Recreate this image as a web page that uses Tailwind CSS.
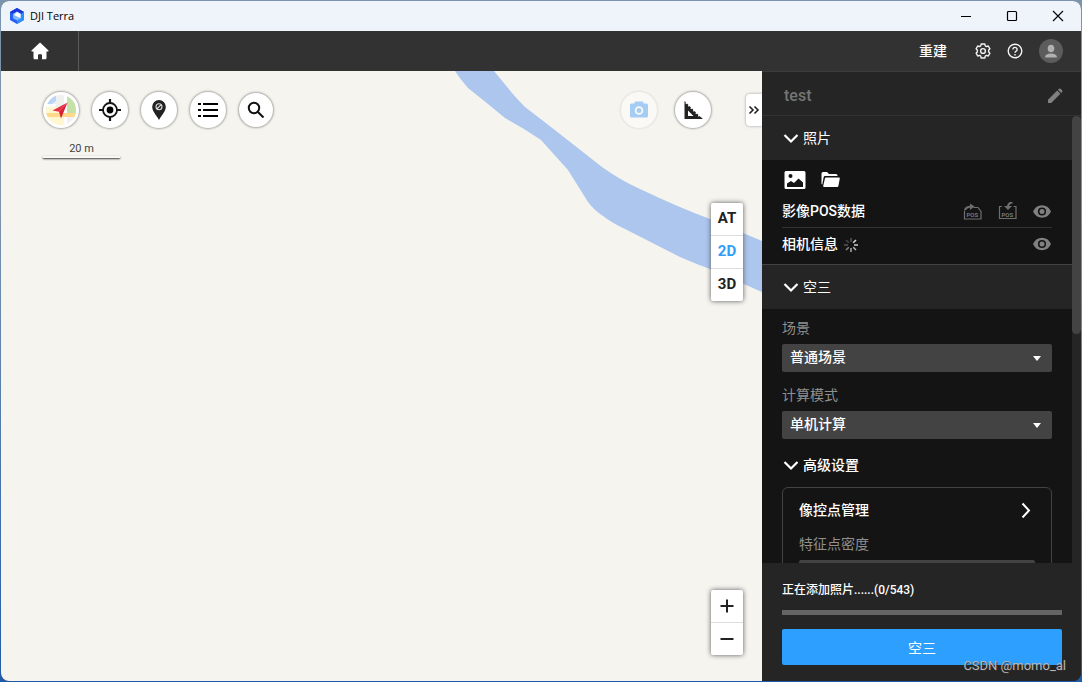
<!DOCTYPE html>
<html lang="zh-CN">
<head>
<meta charset="utf-8">
<meta name="viewport" content="width=device-width, initial-scale=1">
<title>DJI Terra</title>
<script src="https://cdn.jsdelivr.net/npm/@tailwindcss/browser@4"></script>
</head>
<body class="relative h-screen overflow-hidden bg-linear-to-b from-[#7b94ad] from-30% to-[#1f5ba8] p-px font-['Roboto','Noto_Sans_CJK_SC',sans-serif] text-sm text-white">
<div class="flex h-full flex-col overflow-hidden rounded-lg bg-[#252525]">

  <header class="flex h-[30px] shrink-0 items-center bg-[#eff4fb] pl-2 text-black">
    <svg class="size-4" viewBox="0 0 16 16" aria-hidden="true">
      <path d="M8 0l7 4v8l-7 4-7-4V4z" fill="#2460f5"/>
      <path d="M8 0l7 4-3 2-4-2.500-4 2.500-3-2z" fill="#1a35d8"/>
      <path d="M12 6l3-2v8l-7 4v-3.500l4-2.500z" fill="#2f8dfb"/>
      <path d="M8 3.500l4 2.300v4.400l-4 2.300-4-2.300V5.800z" fill="#7fb8ff"/>
      <path d="M8 4l3.500 2v4L8 8.500 5 7z" fill="#fff"/>
    </svg>
    <h1 class="ml-[5px] flex-1 font-['Open_Sans',sans-serif] text-[11px] leading-4">DJI Terra</h1>
    <button class="flex h-full w-[46px] items-center justify-center" aria-label="最小化"><svg class="size-3" viewBox="0 0 12 12" fill="none" stroke="#000"><path d="M1 6.500h10"/></svg></button>
    <button class="flex h-full w-[46px] items-center justify-center" aria-label="最大化"><svg class="size-3" viewBox="0 0 12 12" fill="none" stroke="#000" stroke-width="1.200"><rect x="1.500" y="1.500" width="9" height="9" rx="1"/></svg></button>
    <button class="flex h-full w-[46px] items-center justify-center" aria-label="关闭"><svg class="size-3" viewBox="0 0 12 12" fill="none" stroke="#000" stroke-width="1.100"><path d="M1 1l10 10M11 1L1 11"/></svg></button>
  </header>

  <nav class="flex h-10 shrink-0 items-center bg-[#323232] pr-[18px]">
    <button class="flex h-full w-[78px] items-center justify-center border-r border-[#5a5a5a]" aria-label="主页">
      <svg class="size-5" viewBox="0 0 20 20" fill="#fff"><path d="M10 1.500L1.500 9.500q-.4.900.5.900H3.500V17q0 1.200 1.200 1.200H8V14q0-.8.8-.8h2.400q.8 0 .8.800v4.200h3.300q1.200 0 1.200-1.200v-6.600H18q.9 0 .5-.9L10.600 1.900q-.6-.6-1.200 0z"/></svg>
    </button>
    <div class="flex-1"></div>
    <button class="mr-7 leading-5 font-medium">重建</button>
    <button class="mr-4" aria-label="设置">
      <svg class="size-4" viewBox="0 0 16 16" fill="none" stroke="#f2f2f2" stroke-width="1.400" stroke-linejoin="round"><path d="M6.200 1h3.600l.5 1.900 1.100.7 1.900-.6 1.600 2.800L13.600 7.200v1.600l1.300 1.400-1.600 2.800-1.900-.6-1.100.7-.5 1.900H6.200l-.5-1.900-1.100-.7-1.900.6-1.600-2.800 1.300-1.400V7.200L1.100 5.800 2.700 3l1.900.6 1.100-.7z"/><circle cx="8" cy="8" r="2.400"/></svg>
    </button>
    <button class="mr-4" aria-label="帮助">
      <svg class="size-4" viewBox="0 0 16 16" fill="none" stroke="#f2f2f2" stroke-width="1.400"><circle cx="8" cy="8" r="6.800"/><path d="M5.900 6.500a2.100 2.100 0 1 1 3.300 1.700Q8 8.900 8 9.800"/><path d="M8 11v1.400"/></svg>
    </button>
    <button aria-label="账户">
      <svg class="size-6" viewBox="0 0 24 24"><circle cx="12" cy="12" r="12" fill="#5c5c5c"/><ellipse cx="12" cy="9.500" rx="3.300" ry="3.800" fill="#b0b0b0"/><path d="M6 18.500q0-3.700 6-4 6 .3 6 4z" fill="#b0b0b0"/></svg>
    </button>
  </nav>

  <div class="flex min-h-0 flex-1">
    <main class="relative min-w-0 flex-1 overflow-hidden bg-[#f5f4ef] text-[#222]">
      <svg class="absolute top-0 right-0 h-[230px] w-[761px]" viewBox="1 71 761 230" aria-hidden="true">
        <path fill="#adc6ee" d="M455 71Q460 79 468 88L488 104 505 118 524 129 541 140 568 170 588 202Q594 210 603 216 612 223 625 229L680 257Q696 264 710 269L762 292V241L710 219Q680 208 640 189 620 180 602 167L551 127 525 107Q518 100 512 93L494 71Z"/>
      </svg>

      <div class="absolute top-[21px] left-[42px] flex items-center gap-[13px]">
        <button class="size-9 overflow-hidden rounded-full bg-white p-[3px] shadow-[0_0_2px_1px_#aaa9a4]" aria-label="地图">
          <svg class="size-[30px]" viewBox="0 0 30 30"><defs><clipPath id="disc"><circle cx="15" cy="15" r="15"/></clipPath></defs><g clip-path="url(#disc)"><path fill="#f0f0f0" d="M0 0h30v30H0z"/><path fill="#b9d6f7" d="M0 0h10v6l-4 3H0z"/><path fill="#fff7cf" d="M0 12h19v18H0z"/><path fill="#c4e1a8" d="M21 0h9v18h-9z"/><path fill="#fff" d="M18 0h3v30h-3zM0 9h10l-1 3H0z"/><path fill="#ffd98a" d="M0 18h30v4H0z"/></g><path fill="#e8304a" d="M21.500 7.500L6.500 15.500l6.500 1.300z"/><path fill="#d92238" d="M21.500 7.500L13 16.800l2 6.700z"/></svg>
        </button>
        <button class="flex size-9 items-center justify-center rounded-full bg-white shadow-[0_0_2px_1px_#aaa9a4]" aria-label="定位">
          <svg class="size-6" viewBox="0 0 24 24" fill="none" stroke="#151515" stroke-width="1.800"><circle cx="12" cy="12" r="7"/><circle cx="12" cy="12" r="3.400" fill="#000" stroke="none"/><path stroke-width="2.200" d="M12 1v5M12 18v5M1 12h5M18 12h5"/></svg>
        </button>
        <button class="flex size-9 items-center justify-center rounded-full bg-white shadow-[0_0_2px_1px_#aaa9a4]" aria-label="标记">
          <svg class="size-6" viewBox="0 0 24 24"><path fill="#222" d="M12 2a6.800 6.800 0 0 0-6.800 6.800C5.200 13 9 17 12 22c3-5 6.800-9 6.800-13.200A6.800 6.800 0 0 0 12 2z"/><circle cx="12" cy="8.800" r="3" fill="none" stroke="#ddd" stroke-width="1.100"/><path stroke="#ddd" stroke-width="1.100" d="M9.800 11l4.400-4.400"/></svg>
        </button>
        <button class="flex size-9 items-center justify-center rounded-full bg-white shadow-[0_0_2px_1px_#aaa9a4]" aria-label="列表">
          <svg class="size-5" viewBox="0 0 20 20" fill="#000"><path d="M0 3h3v2H0zM5 3h15v2H5zM0 9h3v2H0zM5 9h15v2H5zM0 15h3v2H0zM5 15h15v2H5z"/></svg>
        </button>
        <button class="flex size-[34px] items-center justify-center rounded-full bg-white shadow-[0_0_2px_1px_#aaa9a4]" aria-label="搜索">
          <svg class="size-[18px]" viewBox="0 0 18 18" fill="none" stroke="#111" stroke-width="2"><circle cx="7" cy="7" r="5.200"/><path d="M10.700 10.700l5.800 5.800"/></svg>
        </button>
      </div>

      <div class="absolute top-[70px] left-[42px] w-[77px] text-center text-[11px] leading-4 text-[#444]">
        20 m
        <div class="-mt-px h-[2px] bg-[#f9f8f5] shadow-[0_1px_2px_#333]"></div>
      </div>

      <div class="absolute top-[21px] right-[51px] flex gap-[18px]">
        <button class="flex size-9 items-center justify-center rounded-full bg-[#faf9f6] shadow-[0_0_2px_1px_#e2e1dd]" aria-label="拍照">
          <svg class="size-5" viewBox="0 0 20 20"><path fill="#a5cdf3" d="M2.500 3.500H5.500V2.500q0-1 1-1h7q1 0 1 1v1h3Q19 3.500 19 5v11q0 1.500-1.500 1.500h-15Q1 17.500 1 16V5Q1 3.500 2.500 3.500z"/><circle cx="10" cy="10.500" r="3.400" fill="none" stroke="#faf9f6" stroke-width="1.800"/></svg>
        </button>
        <button class="flex size-9 items-center justify-center rounded-full bg-white shadow-[0_0_2px_1px_#aaa9a4]" aria-label="测量">
          <svg class="size-5" viewBox="0 0 20 20"><path fill="#222" fill-rule="evenodd" d="M1.500 1l1.500 1.500-.7.700 1 1 .7-.7L5.500 5l-.7.700 1 1 .7-.7L8 7.500l-.7.700 1 1 .7-.7 1.500 1.500-.7.700 1 1 .7-.7 1.500 1.500-.7.700 1 1 .7-.7 1.500 1.500-.7.700 1 1 .7-.7L20 19H1.500zM5 10.500V16h5.500z"/></svg>
        </button>
      </div>
      <button class="absolute top-[23px] right-0 flex h-8 w-4 items-center justify-center rounded-l-sm bg-white shadow-[0_0_3px_#999]" aria-label="收起面板">
        <svg class="size-3" viewBox="0 0 12 12" fill="none" stroke="#222" stroke-width="1.600"><path d="M1.500 2.500L5 6 1.500 9.500M6.500 2.500L10 6 6.500 9.500"/></svg>
      </button>

      <div class="absolute top-[132px] right-[19px] flex w-8 flex-col divide-y divide-[#ddd] rounded-xs bg-white text-[15px] font-bold shadow-[0_0_5px_#555]">
        <button class="h-8 box-content">AT</button>
        <button class="h-8 box-content text-[#2f9efa]">2D</button>
        <button class="h-8 box-content">3D</button>
      </div>

      <div class="absolute right-[19px] bottom-[26px] flex w-8 flex-col divide-y divide-[#ddd] rounded-xs bg-white shadow-[0_0_5px_#555]">
        <button class="box-content flex h-8 items-center justify-center" aria-label="放大"><svg class="size-4" viewBox="0 0 16 16" stroke="#222" stroke-width="2"><path d="M1.500 8h13M8 1.500v13"/></svg></button>
        <button class="box-content flex h-8 items-center justify-center" aria-label="缩小"><svg class="size-4" viewBox="0 0 16 16" stroke="#222" stroke-width="2"><path d="M1.500 8h13"/></svg></button>
      </div>
    </main>

    <aside class="flex w-[319px] shrink-0 flex-col bg-[#252525]">
      <div class="flex h-[45px] shrink-0 items-center justify-between border-y border-t-[#3c3c3c] border-b-[#323232] pr-[18px] pl-[22px]">
        <h2 class="pt-1 text-base font-medium text-[#757575]">test</h2>
        <button aria-label="重命名"><svg class="mt-1 size-4" viewBox="0 0 16 16" fill="#808080"><path d="M1 15v-3.200L10.200 2.600l3.200 3.200L4.200 15zM11 1.800l1-1q.8-.6 1.600 0l1.600 1.600q.6.800 0 1.600l-1 1z"/></svg></button>
      </div>

      <div class="flex min-h-0 flex-1">
        <div class="min-w-0 flex-1 overflow-hidden bg-[#141414]">
          <section>
            <button class="flex h-11 w-full items-center gap-1 bg-[#252525] pb-px pl-[21px]" aria-expanded="true">
              <svg class="size-4" viewBox="0 0 16 16" fill="none" stroke="#fff" stroke-width="2.200"><path d="M1.500 5L8 11.500 14.500 5"/></svg>照片
            </button>
            <div class="px-5 pt-[10px] pb-1">
              <div class="flex h-5 items-center gap-[14px] pl-[2px]">
                <button aria-label="添加照片"><svg class="h-5 w-[22px]" viewBox="0 0 22 20"><path fill="#fff" fill-rule="evenodd" d="M2 1h18q1.500 0 1.500 1.500v15Q21.500 19 20 19H2Q.5 19 .5 17.500v-15Q.5 1 2 1zM3 13.500V17h16v-4.500L14.500 8.500 10 13 7 11z"/><circle cx="6.500" cy="6" r="2" fill="#141414"/></svg></button>
                <button aria-label="添加文件夹"><svg class="h-5 w-5" viewBox="0 0 20 20" fill="#fff"><path d="M1.500 3.500Q1.500 2 3 2h4l2 2H16q1.500 0 1.500 1.500V6H5Q4 6 3.700 7L2.300 14.500 1.500 14z"/><path d="M6 7.500H19q1 0 .8 1l-1.400 7.500q-.2 1-1.200 1H4q-1 0-.8-1L4.900 8.500q.2-1 1.100-1z"/></svg></button>
              </div>
              <div class="mt-[5px] flex h-[33px] items-center border-b border-[#323232] font-medium">
                <span class="flex-1">影像POS数据</span>
                <button class="mr-4" aria-label="导出 POS"><svg class="h-[18px] w-[19px]" viewBox="0 0 19 18" fill="none" stroke="#6e6e6e" stroke-width="1.200"><path d="M1.500 8.500v8.500h16.500V9.500L15 5.500H10.500"/><path stroke-width="2.200" d="M2 8Q3 5 8 4.500"/><path fill="#6e6e6e" stroke="none" d="M7 1.500L11.500 4.500 7 8z"/><text x="3.500" y="14.500" font-size="6" fill="#858585" stroke="none">POS</text></svg></button>
                <button class="mr-[15px]" aria-label="导入 POS"><svg class="h-[18px] w-[19px]" viewBox="0 0 19 18" fill="none" stroke="#6e6e6e" stroke-width="1.200"><path d="M4 4.500H1.500V16.500h16.500V4.500h-2.500"/><path stroke-width="2.200" d="M14.500 .5Q10.500 .5 10 4.500"/><path fill="#6e6e6e" stroke="none" d="M6 4h8l-4 4z"/><text x="3.500" y="14.500" font-size="6" fill="#858585" stroke="none">POS</text></svg></button>
                <button aria-label="显示影像"><svg class="h-[18px] w-5" viewBox="0 0 20 18"><path fill="#808080" fill-rule="evenodd" d="M1 9.500Q4 3.300 10 3.300t9 6.200q-3 6.200-9 6.200T1 9.500zM10 5.400a4.100 4.100 0 1 0 0 8.200 4.100 4.100 0 0 0 0-8.200z"/><circle cx="10" cy="9.500" r="2.500" fill="#808080"/></svg></button>
              </div>
              <div class="flex h-8 items-center font-medium">
                <span>相机信息</span>
                <svg class="mt-px ml-[6px] size-[14px]" viewBox="0 0 14 14" fill="none" stroke-width="1.500" aria-hidden="true"><path stroke="#555" d="M7 0v4"/><path stroke="#ddd" d="M9.200 4.800L12 2"/><path stroke="#ccc" d="M10 7h4"/><path stroke="#bbb" d="M9.200 9.200L12 12"/><path stroke="#aaa" d="M7 10v4"/><path stroke="#888" d="M4.800 9.200L2 12"/><path stroke="#555" d="M4 7H0"/><path stroke="#444" d="M4.800 4.800L2 2"/></svg>
                <span class="flex-1"></span>
                <button aria-label="显示相机"><svg class="h-[18px] w-5" viewBox="0 0 20 18"><path fill="#808080" fill-rule="evenodd" d="M1 9Q4 2.800 10 2.800t9 6.200q-3 6.200-9 6.200T1 9zM10 4.900a4.100 4.100 0 1 0 0 8.200 4.100 4.100 0 0 0 0-8.200z"/><circle cx="10" cy="9" r="2.500" fill="#808080"/></svg></button>
              </div>
            </div>
          </section>

          <section>
            <button class="flex h-[45px] w-full items-center gap-1 border-t border-[#434343] bg-[#252525] pl-[21px]" aria-expanded="true">
              <svg class="size-4" viewBox="0 0 16 16" fill="none" stroke="#fff" stroke-width="2.200"><path d="M1.500 5L8 11.500 14.500 5"/></svg>空三
            </button>
            <div class="px-5 pt-[9px]">
              <label for="scene" class="block leading-5 text-[#8f8f8f]">场景</label>
              <div class="relative mt-[6px]">
                <select id="scene" class="h-7 w-full appearance-none rounded-xs bg-[#434343] px-2 pb-[2px] font-medium"><option>普通场景</option></select>
                <svg class="pointer-events-none absolute top-3 right-[11px] h-[5px] w-2" viewBox="0 0 8 5" fill="#fff"><path d="M0 0h8L4 5z"/></svg>
              </div>
              <label for="mode" class="mt-[13px] block leading-5 text-[#8f8f8f]">计算模式</label>
              <div class="relative mt-[6px]">
                <select id="mode" class="h-7 w-full appearance-none rounded-xs bg-[#434343] px-2 pb-[2px] font-medium"><option>单机计算</option></select>
                <svg class="pointer-events-none absolute top-3 right-[11px] h-[5px] w-2" viewBox="0 0 8 5" fill="#fff"><path d="M0 0h8L4 5z"/></svg>
              </div>
              <button class="mt-4 flex h-5 items-center gap-1 pl-px font-medium" aria-expanded="true">
                <svg class="size-4" viewBox="0 0 16 16" fill="none" stroke="#fff" stroke-width="2.200"><path d="M1.500 5L8 11.500 14.500 5"/></svg>高级设置
              </button>
              <div class="mt-3 rounded-md border border-[#434343] px-4 pt-3 pb-4">
                <button class="flex h-5 w-full items-center justify-between font-medium">像控点管理
                  <svg class="mr-[1px] size-4" viewBox="0 0 16 16" fill="none" stroke="#fff" stroke-width="2"><path d="M4.500 1.500L11 8.500 4.500 15.500"/></svg>
                </button>
                <label for="density" class="mt-[14px] block leading-5 text-[#8f8f8f]">特征点密度</label>
                <select id="density" class="mt-[6px] h-7 w-full appearance-none rounded-xs bg-[#434343] px-2 font-medium"></select>
              </div>
            </div>
          </section>
        </div>
        <div class="w-[9px] shrink-0 bg-[#252525]" aria-hidden="true"><div class="h-[218px] rounded-full bg-[#434343]"></div></div>
      </div>

      <footer class="shrink-0 pt-[19px] pr-[19px] pb-4 pl-5">
        <p class="text-xs leading-4 font-medium">正在添加照片......(0/543)</p>
        <div class="mt-3 h-[5px] bg-[#646464]" role="progressbar" aria-valuenow="0" aria-valuemax="543" aria-label="添加照片"></div>
        <button class="mt-[14px] block h-9 w-full rounded-xs bg-[#2d9fff] pt-[2px]">空三</button>
      </footer>
    </aside>
  </div>
</div>
<span class="pointer-events-none absolute right-4 bottom-2 text-[13px] leading-4 font-['Roboto',sans-serif] text-[#b8b8b8] text-shadow-[1px_1px_1px_#333]">CSDN @momo_al</span>
</body>
</html>
